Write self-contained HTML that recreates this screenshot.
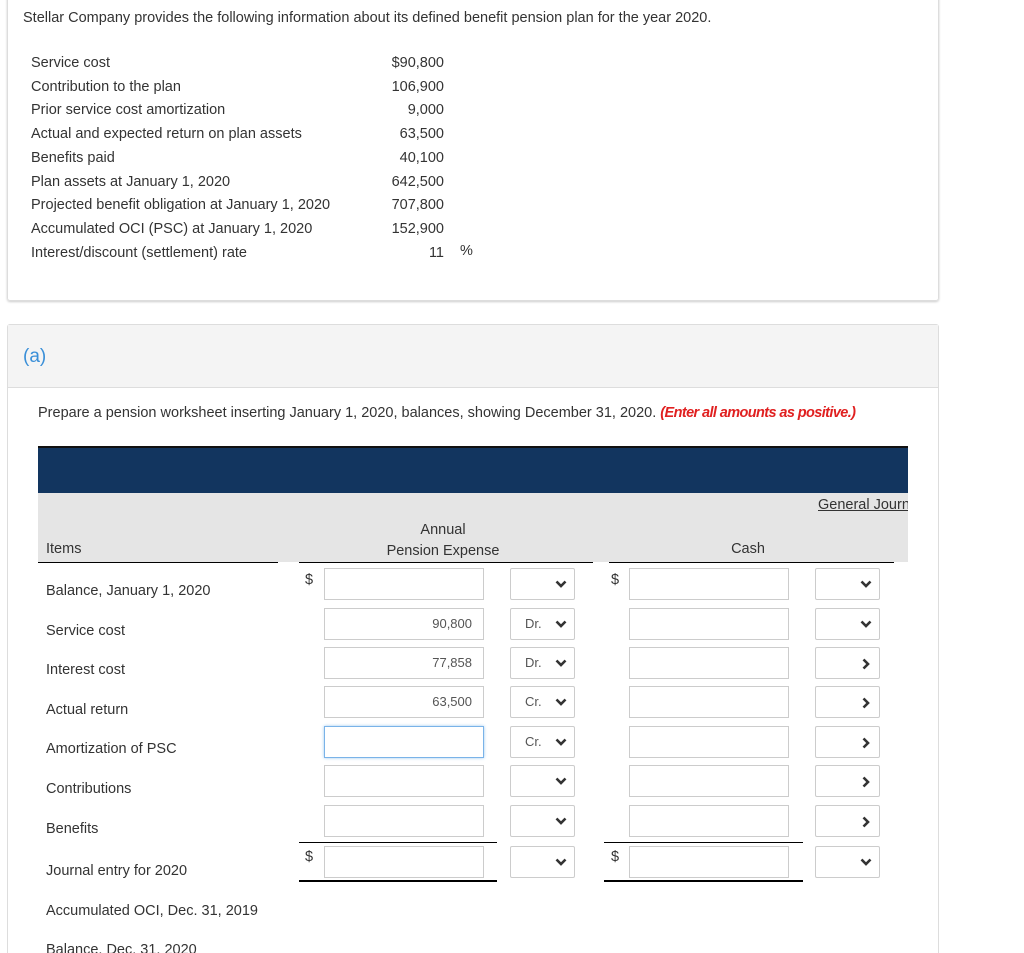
<!DOCTYPE html>
<html><head><meta charset="utf-8"><style>
html,body{margin:0;width:1024px;height:953px;overflow:hidden}
body{background:#fff;font-family:"Liberation Sans",sans-serif;color:#333;position:relative}
.a{position:absolute;white-space:nowrap}
.box1{position:absolute;left:7px;top:-5px;width:930px;height:304px;border:1px solid #ddd;border-radius:3px;box-shadow:0 1px 2px #ccc}
.box2{position:absolute;left:7px;top:324px;width:930px;height:660px;border:1px solid #ddd;border-radius:3px}
.hd{position:absolute;left:8px;top:325px;width:930px;height:62px;background:#f4f4f4;border-bottom:1px solid #ddd}
.t{font-size:14.5px}
.in{position:absolute;width:160px;height:32px;border:1px solid #ccc;background:#fff;box-sizing:border-box;font-size:13px;color:#555;text-align:right;padding-right:11px;line-height:30px}
.sel{position:absolute;width:65px;height:32px;border:1px solid #ccc;background:#fff;box-sizing:border-box;font-size:13px;color:#555;padding-left:14px;line-height:30px;border-radius:2px}
.sel svg{position:absolute;right:7px;top:11px}
.ln{position:absolute;height:1px;background:#000}
</style></head><body>
<div class="box1"></div>
<div class="a t" style="left:23px;top:10px">Stellar Company provides the following information about its defined benefit pension plan for the year 2020.</div>
<div class="a t" style="left:31px;top:52px;line-height:23.7px">Service cost<br>Contribution to the plan<br>Prior service cost amortization<br>Actual and expected return on plan assets<br>Benefits paid<br>Plan assets at January 1, 2020<br>Projected benefit obligation at January 1, 2020<br>Accumulated OCI (PSC) at January 1, 2020<br>Interest/discount (settlement) rate</div>
<div class="a t" style="left:380px;width:64px;top:52px;line-height:23.7px;text-align:right">$90,800<br>106,900<br>9,000<br>63,500<br>40,100<br>642,500<br>707,800<br>152,900<br>11</div>
<div class="a t" style="left:460px;top:243px">%</div>
<div class="box2"></div><div class="hd"></div>
<div class="a" style="left:23px;top:346px;font-size:19px;color:#3a8fd8">(a)</div>
<div class="a t" style="left:38px;top:405px">Prepare a pension worksheet inserting January 1, 2020, balances, showing December 31, 2020. <b style="color:#e02020;font-style:italic;letter-spacing:-0.6px">(Enter all amounts as positive.)</b></div>
<div class="a" style="left:38px;top:446px;width:870px;height:47px;background:#12355f;border-top:2px solid #111"></div>
<div class="a" style="left:38px;top:493px;width:870px;height:69px;background:#e5e5e5"></div>
<div class="a t" style="left:818px;top:497px;text-decoration:underline;width:90px;overflow:hidden">General Journal</div>
<div class="a t" style="left:296px;width:294px;top:520px;text-align:center;line-height:21px">Annual<br>Pension Expense</div>
<div class="a t" style="left:608px;width:280px;top:541px;text-align:center">Cash</div>
<div class="a t" style="left:46px;top:541px">Items</div>
<div class="ln" style="left:38px;top:562px;width:240px"></div>
<div class="ln" style="left:299px;top:562px;width:294px"></div>
<div class="ln" style="left:609px;top:562px;width:285px"></div>
<div class="a t" style="left:46px;top:572px;line-height:39.6px">Balance, January 1, 2020<br>Service cost<br>Interest cost<br>Actual return<br>Amortization of PSC<br>Contributions<br>Benefits<br><span style="display:inline-block;margin-top:3px">Journal entry for 2020</span><br>Accumulated OCI, Dec. 31, 2019<br>Balance, Dec. 31, 2020</div>
<div class="a t" style="left:305px;top:572px">$</div><div class="a t" style="left:611px;top:572px">$</div>
<div class="a t" style="left:305px;top:849px">$</div><div class="a t" style="left:611px;top:849px">$</div>
<div class="ln" style="left:299px;top:842px;width:198px"></div>
<div class="ln" style="left:604px;top:842px;width:199px"></div>
<div class="ln" style="left:299px;top:880px;width:198px;height:2px"></div>
<div class="ln" style="left:604px;top:880px;width:199px;height:2px"></div>
<div id="rows"></div>
<script>
var tops=[568,608,647,686,726,765,805,846],v=["","90,800","77,858","63,500","","","",""],d=["","Dr.","Dr.","Cr.","Cr.","","",""];
var chev='<svg width="12" height="8" viewBox="0 0 12 8"><path d="M1.5 1.5L6 6L10.5 1.5" stroke="#333" stroke-width="2.6" fill="none"/></svg>';
var chr='<svg width="8" height="12" viewBox="0 0 8 12" style="right:9px;top:10px"><path d="M1.5 1.5L6 6L1.5 10.5" stroke="#333" stroke-width="2.6" fill="none"/></svg>';
var h='';
tops.forEach(function(t,i){
h+='<div class="in" style="left:324px;top:'+t+'px;'+(i==4?'border-color:#7ab3e8;box-shadow:0 0 3px #9cc8f0':'')+'">'+v[i]+'</div>';
h+='<div class="sel" style="left:510px;top:'+t+'px">'+d[i]+chev+'</div>';
h+='<div class="in" style="left:629px;top:'+t+'px"></div>';
h+='<div class="sel" style="left:815px;top:'+t+'px">'+((i>=2&&i<=6)?chr:chev)+'</div>';
});
document.getElementById('rows').innerHTML=h;
</script>
</body></html>
